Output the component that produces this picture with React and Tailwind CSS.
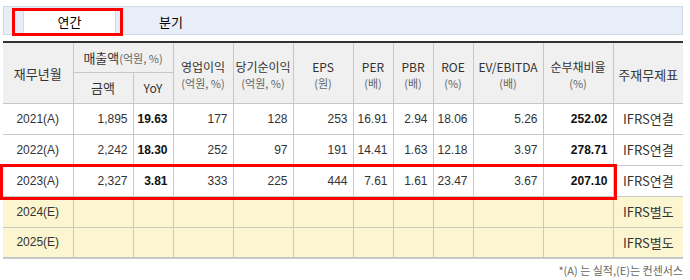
import React from "react";

const rows = [
  { y: "2021(A)", v: ["1,895", "19.63", "177", "128", "253", "16.91", "2.94", "18.06", "5.26", "252.02"], t: "IFRS연결", e: false },
  { y: "2022(A)", v: ["2,242", "18.30", "252", "97", "191", "14.41", "1.63", "12.18", "3.97", "278.71"], t: "IFRS연결", e: false },
  { y: "2023(A)", v: ["2,327", "3.81", "333", "225", "444", "7.61", "1.61", "23.47", "3.67", "207.10"], t: "IFRS연결", e: false },
  { y: "2024(E)", v: ["", "", "", "", "", "", "", "", "", ""], t: "IFRS별도", e: true },
  { y: "2025(E)", v: ["", "", "", "", "", "", "", "", "", ""], t: "IFRS별도", e: true },
];

const widths = [70, 60, 40, 60, 60, 60, 40, 40, 40, 70, 70, 70];
const bold = [false, true, false, false, false, false, false, false, false, true];

const kr = { fontFamily: '"Noto Sans CJK KR", "Noto Sans", sans-serif' };
const num = { fontFamily: '"Liberation Sans", Arial, sans-serif' };

function H2({ a, b }) {
  return (
    <th rowSpan={2} className="border-l border-b border-[#c8c8c8] font-normal align-middle leading-[16px] pt-[4px] whitespace-nowrap">
      <div className="text-[12px] text-[#333]">{a}</div>
      <div className="text-[11px] text-[#666]">{b}</div>
    </th>
  );
}

export default function App() {
  return (
    <div className="relative w-[690px] h-[280px] bg-white overflow-hidden" style={kr}>
      <div className="pl-[3px] pr-[7px] pt-[6px]">
        {/* tab bar */}
        <div className="h-[29px] border border-[#d2dae8] bg-[#e8eef8] flex pl-[19px] pt-[3px]">
          <div className="w-[93px] h-[24px] bg-white border-x border-[#d2dae8] flex items-center justify-center text-[13px] text-black">연간</div>
          <div className="w-[110px] h-[24px] flex items-center justify-center text-[13px] text-black">분기</div>
        </div>
        {/* table */}
        <table className="mt-[6px] w-[680px] table-fixed border-collapse border-t-2 border-t-[#333] border-b-2 border-b-[#c8c8c8] text-center">
          <colgroup>
            {widths.map((w, i) => (
              <col key={i} style={{ width: w }} />
            ))}
          </colgroup>
          <thead className="bg-[#f0f0f0]">
            <tr className="h-[30px]">
              <th rowSpan={2} className="border-b border-[#c8c8c8] font-normal text-[13px] text-[#333] pt-[2px]">재무년월</th>
              <th colSpan={2} className="border-l border-b border-[#c8c8c8] font-normal text-[13px] text-[#333] whitespace-nowrap">
                매출액<span className="text-[11px] text-[#666]">(억원, %)</span>
              </th>
              <H2 a="영업이익" b="(억원, %)" />
              <H2 a="당기순이익" b="(억원, %)" />
              <H2 a="EPS" b="(원)" />
              <H2 a="PER" b="(배)" />
              <H2 a="PBR" b="(배)" />
              <H2 a="ROE" b="(%)" />
              <H2 a="EV/EBITDA" b="(배)" />
              <H2 a="순부채비율" b="(%)" />
              <th rowSpan={2} className="border-l border-b border-[#c8c8c8] font-normal text-[13px] text-[#333] pt-[4px]">주재무제표</th>
            </tr>
            <tr className="h-[31px]">
              <th className="border-l border-b border-[#c8c8c8] font-normal text-[13px] text-[#333]">금액</th>
              <th className="border-l border-b border-[#c8c8c8] font-normal text-[12px] text-[#333]">YoY</th>
            </tr>
          </thead>
          <tbody>
            {rows.map((r, i) => (
              <tr key={i} className={`h-[31px] ${r.e ? "bg-[#fcf6d0]" : "bg-white"}`}>
                <td className={`text-[12px] text-[#333] ${i < 4 ? "border-b border-[#c8c8c8]" : ""}`} style={num}>{r.y}</td>
                {r.v.map((v, j) => (
                  <td
                    key={j}
                    className={`border-l border-[#c8c8c8] ${i < 4 ? "border-b" : ""} text-right pr-[5px] text-[12px] ${bold[j] ? "font-bold text-[#111]" : "text-[#333]"}`}
                    style={num}
                  >
                    {v}
                  </td>
                ))}
                <td className={`border-l border-[#c8c8c8] ${i < 4 ? "border-b" : ""} text-[13px] text-[#333]`}>{r.t}</td>
              </tr>
            ))}
          </tbody>
        </table>
        <div className="text-right text-[11px] text-[#666] leading-[14px] mt-[4px]">*(A) 는 실적,(E)는 컨센서스</div>
      </div>
      {/* annotation overlays */}
      <div className="absolute left-[12px] top-[8px] w-[111px] h-[28px] border-[3px] border-[#ff0000]" />
      <div className="absolute left-[0px] top-[164px] w-[617px] h-[36px] border-[3px] border-[#ff0000]" />
    </div>
  );
}
